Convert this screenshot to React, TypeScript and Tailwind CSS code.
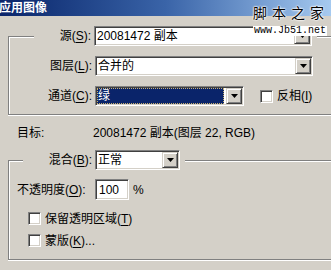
import React from 'react';

const FONT = "font-['Liberation_Sans','Noto_Sans_CJK_SC',sans-serif]";

// sunken 3d edge used by combo boxes, text fields and check boxes
const SUNKEN =
  'border border-t-[#808080] border-l-[#808080] border-r-white border-b-white shadow-[inset_1px_1px_0_#404040,inset_-1px_-1px_0_#D4D0C8]';

function Mn({ k }: { k: string }) {
  return <span className="underline underline-offset-2">{k}</span>;
}

function Combo({ width, value, selected }: { width: string; value: string; selected?: boolean }) {
  return (
    <div className={`flex h-[20px] bg-white ${SUNKEN} ${width}`}>
      <div className="flex flex-1 items-center p-[1px] min-w-0">
        {selected ? (
          <div className="flex h-full w-full items-center bg-[#0A246A] pl-[1px] text-white outline outline-1 outline-dotted outline-[#c8b070] -outline-offset-1">
            {value}
          </div>
        ) : (
          <span className="pl-[1px] text-black">{value}</span>
        )}
      </div>
      <div className="m-[1px] flex w-[16px] items-center justify-center bg-[#D4D0C8] border border-t-[#D4D0C8] border-l-[#D4D0C8] border-r-[#404040] border-b-[#404040] shadow-[inset_1px_1px_0_#fff,inset_-1px_-1px_0_#808080]">
        <svg width="7" height="4" viewBox="0 0 7 4">
          <polygon points="0,0 7,0 3.5,4" fill="#000" />
        </svg>
      </div>
    </div>
  );
}

function Check() {
  return <div className={`h-[13px] w-[13px] bg-white ${SUNKEN}`} />;
}

export default function App() {
  return (
    <div className={`relative h-[270px] w-[331px] overflow-hidden bg-[#D4D0C8] text-[12px] leading-none text-black ${FONT}`}>
      {/* Title bar */}
      <div className="flex h-[16px] items-center bg-linear-to-r from-[#0A246A] via-[#3a64a8] to-[#A6CAF0]">
        <span className="-ml-[1px] text-[12px] font-bold text-white">应用图像</span>
      </div>

      {/* Source group */}
      <fieldset className="ml-[8px] mt-[10px] w-[340px] border border-[#808080] pb-[8px] shadow-[inset_1px_1px_0_#fff,0_1px_0_#fff]">
        <legend className="ml-[25px] bg-[#D4D0C8] pr-[5px]">
          <div className="flex h-[20px] items-center">
            <span className="w-[57px] text-right">源(<Mn k="S" />):</span>
            <div className="ml-[3px]">
              <Combo width="w-[218px]" value="20081472 副本" />
            </div>
          </div>
        </legend>
        <div className="mt-[10px] flex items-center">
          <span className="w-[83px] text-right">图层(<Mn k="L" />):</span>
          <div className="ml-[3px]">
            <Combo width="w-[218px]" value="合并的" />
          </div>
        </div>
        <div className="mt-[10px] flex items-center">
          <span className="w-[83px] text-right">通道(<Mn k="C" />):</span>
          <div className="ml-[3px]">
            <Combo width="w-[149px]" value="绿" selected />
          </div>
          <div className="ml-[16px] flex items-center gap-[4px]">
            <Check />
            <span>反相(<Mn k="I" />)</span>
          </div>
        </div>
      </fieldset>

      {/* Target */}
      <div className="mt-[10px] flex h-[16px] items-center pl-[17px]">
        <span className="w-[76px]">目标:</span>
        <span>20081472 副本(图层 22, RGB)</span>
      </div>

      {/* Blending group */}
      <fieldset className="ml-[8px] mt-[9px] w-[340px] border border-[#808080] pb-[12px] shadow-[inset_1px_1px_0_#fff,0_1px_0_#fff]">
        <legend className="ml-[14px] bg-[#D4D0C8] pr-[5px]">
          <div className="flex h-[20px] items-center">
            <span className="w-[69px] text-right">混合(<Mn k="B" />):</span>
            <div className="ml-[3px]">
              <Combo width="w-[85px]" value="正常" />
            </div>
          </div>
        </legend>
        <div className="mt-[9px] flex items-center pl-[8px]">
          <span className="w-[78px]">不透明度(<Mn k="O" />):</span>
          <div className={`flex h-[21px] w-[34px] items-center bg-white pl-[3px] ${SUNKEN}`}>100</div>
          <span className="ml-[4px]">%</span>
        </div>
        <div className="mt-[12px] flex items-center pl-[19px]">
          <Check />
          <span className="ml-[4px]">保留透明区域(<Mn k="T" />)</span>
        </div>
        <div className="mt-[9px] flex items-center pl-[19px]">
          <Check />
          <span className="ml-[4px]">蒙版(<Mn k="K" />)...</span>
        </div>
      </fieldset>

      {/* Watermark overlay */}
      <div className="absolute left-[253px] top-[5px] text-[14px] leading-[14px] tracking-[5px] text-black [text-shadow:0_0_2px_#fff,0_0_2px_#fff,0_0_2px_#fff] font-['Noto_Sans_CJK_SC',sans-serif]">
        脚本之家
      </div>
      <div className="absolute left-[253px] top-[26px] bg-white px-[1px] text-[10px] leading-[10px] font-['Liberation_Mono',monospace]">
        www.Jb51.net
      </div>
    </div>
  );
}
